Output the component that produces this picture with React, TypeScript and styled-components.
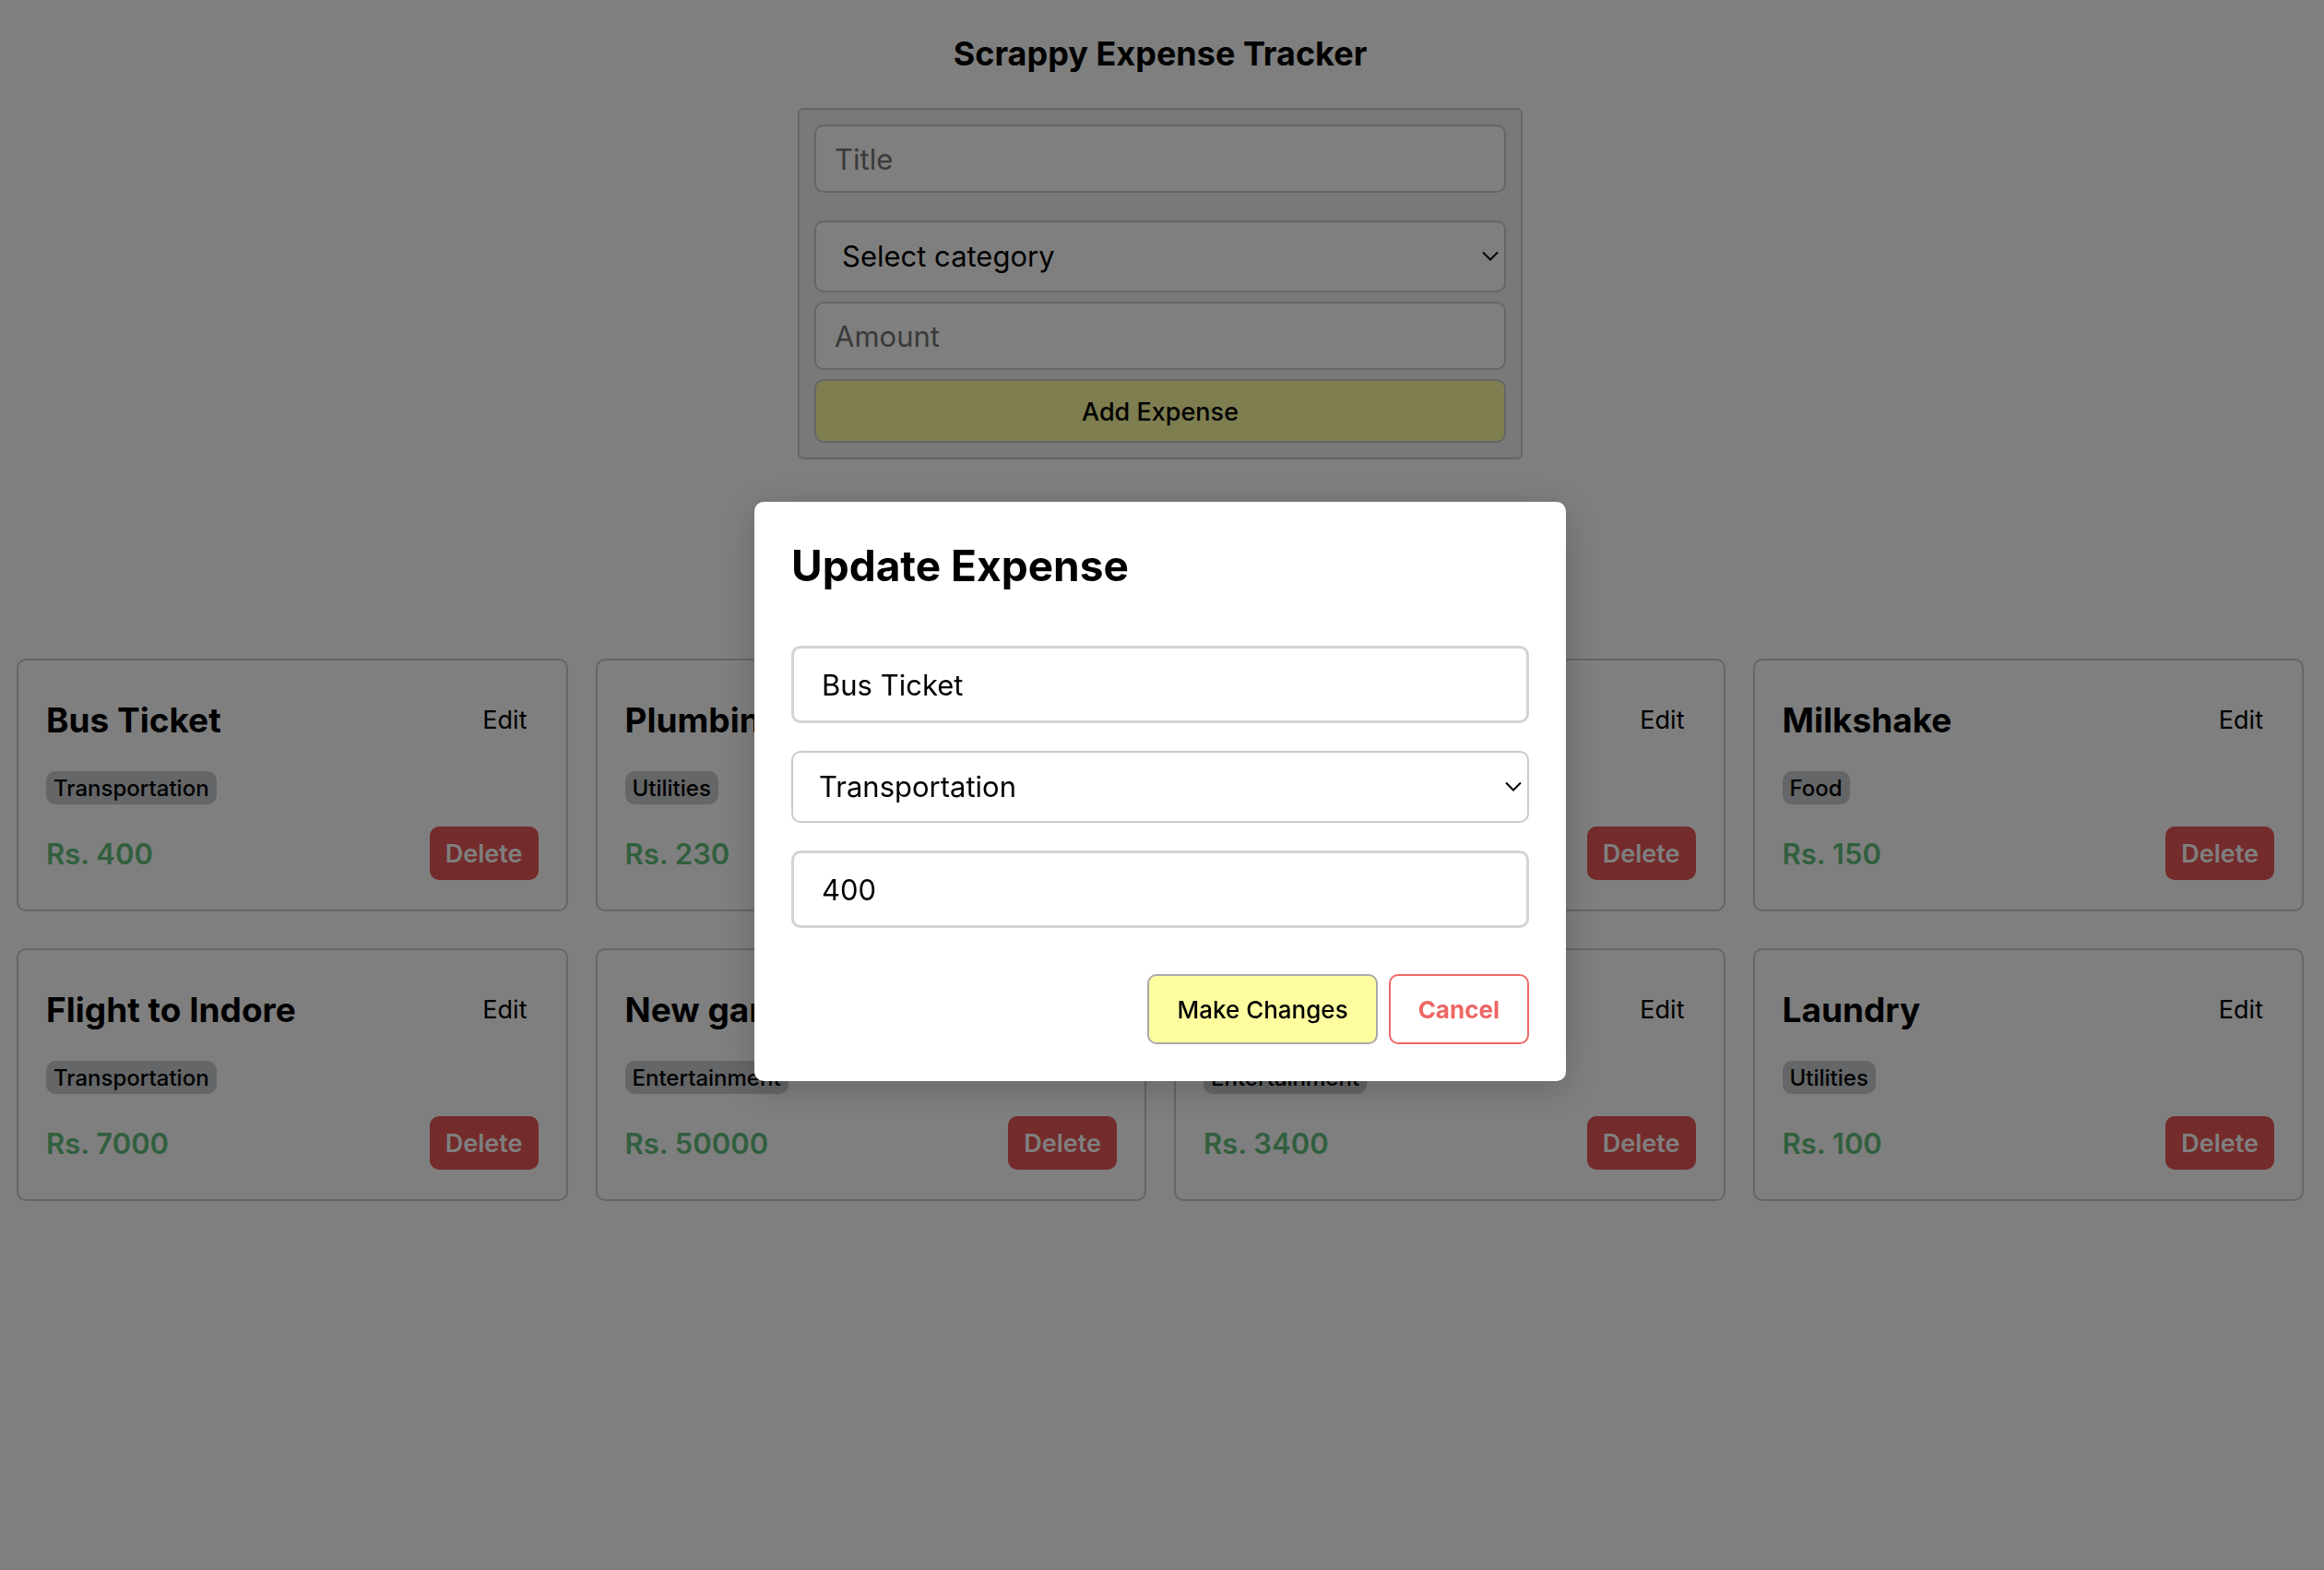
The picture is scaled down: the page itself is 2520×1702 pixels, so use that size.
import React from "react";
import styled, { createGlobalStyle } from "styled-components";

const colors = {
  text: "#000000",
  border: "#c9ccce",
  panel: "#f3f3f3",
  accent: "#fdfda0",
  danger: "#e85656",
  cancel: "#ed6765",
  amount: "#62be7c",
  tag: "#c8ccd0",
};

const GlobalStyle = createGlobalStyle`
  *, *::before, *::after { box-sizing: border-box; }
  body {
    margin: 0;
    background: #ffffff;
    color: ${colors.text};
    font-family: Inter, "Liberation Sans", sans-serif;
  }
  button, input, select { font: inherit; color: inherit; margin: 0; }
`;

const Page = styled.main`
  display: flex;
  flex-direction: column;
  align-items: center;
  padding: 34px 22px 40px 18px;
`;

const PageTitle = styled.h1`
  margin: 0 0 35px;
  font-size: 36px;
  line-height: 48px;
  font-weight: 700;
`;

const EntryForm = styled.form`
  display: flex;
  flex-direction: column;
  gap: 10px;
  width: 100%;
  max-width: 786px;
  margin-bottom: 216px;
  padding: 16px;
  border: 2px solid ${colors.border};
  border-radius: 6px;
  background: ${colors.panel};
`;

const FormInput = styled.input<{ $spaced?: boolean }>`
  width: 100%;
  margin-bottom: ${(p) => (p.$spaced ? "20px" : "0")};
  padding: 16px 20px;
  border: 2px solid ${colors.border};
  border-radius: 10px;
  background: #ffffff;
  font-size: 31px;
  line-height: 38px;
  height: 74px;
  outline: none;
  &::placeholder { color: #757575; opacity: 1; }
`;

const SelectBox = styled.div`
  position: relative;
  display: flex;
`;

const SelectControl = styled.select`
  appearance: none;
  width: 100%;
  padding: 18px 40px 18px 28px;
  border: 2px solid ${colors.border};
  border-radius: 10px;
  background: #ffffff;
  font-size: 31px;
  line-height: 38px;
  outline: none;
`;

const SelectArrow = styled.svg`
  position: absolute;
  top: 0;
  bottom: 0;
  right: 8px;
  margin: auto 0;
  pointer-events: none;
`;

const AddButton = styled.button`
  padding: 17px 16px 15px;
  border: 2px solid ${colors.border};
  border-radius: 10px;
  background: ${colors.accent};
  font-size: 27px;
  line-height: 33px;
  font-weight: 500;
  cursor: pointer;
`;

const CardGrid = styled.section`
  display: grid;
  grid-template-columns: repeat(4, minmax(0, 1fr));
  gap: 40px 30px;
  width: 100%;
`;

const Card = styled.article`
  display: flex;
  flex-direction: column;
  align-items: stretch;
  padding: 31px 30px 32px;
  border: 2px solid ${colors.border};
  border-radius: 10px;
  background: #ffffff;
`;

const CardRow = styled.div`
  display: flex;
  align-items: center;
  justify-content: space-between;
`;

const CardTitle = styled.h2`
  margin: 0;
  font-size: 37px;
  line-height: 68px;
  font-weight: 700;
  white-space: nowrap;
`;

const EditButton = styled.button`
  padding: 8px 12px;
  border: 0;
  background: transparent;
  font-size: 27px;
  line-height: 32px;
  cursor: pointer;
`;

const Tag = styled.span`
  align-self: flex-start;
  margin: 21px 0 24px;
  padding: 1px 8px 0;
  border-radius: 10px;
  background: ${colors.tag};
  font-size: 24px;
  line-height: 35px;
  font-weight: 500;
`;

const Amount = styled.span`
  padding-top: 2px;
  color: ${colors.amount};
  font-size: 31px;
  line-height: 38px;
  font-weight: 600;
`;

const DeleteButton = styled.button`
  padding: 14px 17px 12px;
  border: 0;
  border-radius: 10px;
  background: ${colors.danger};
  color: #ffffff;
  font-size: 27px;
  line-height: 32px;
  font-weight: 600;
  cursor: pointer;
`;

const Overlay = styled.div`
  position: fixed;
  inset: 0;
  display: flex;
  align-items: center;
  justify-content: center;
  padding: 14px 4px 0 0;
  background: rgba(0, 0, 0, 0.5);
`;

const Dialog = styled.form`
  display: flex;
  flex-direction: column;
  gap: 30px;
  width: 100%;
  max-width: 880px;
  padding: 40px;
  border-radius: 10px;
  background: #ffffff;
  box-shadow: 0 8px 40px rgba(0, 0, 0, 0.2);
`;

const DialogTitle = styled.h2`
  margin: 0 0 28px;
  font-size: 46px;
  line-height: 58px;
  font-weight: 700;
`;

const DialogInput = styled.input`
  width: 100%;
  height: 84px;
  padding: 20px 30px;
  border: 3px solid #d3d3d3;
  border-radius: 10px;
  background: #ffffff;
  font-size: 31px;
  line-height: 38px;
  outline: none;
`;

const DialogActions = styled.div`
  display: flex;
  justify-content: flex-end;
  gap: 12px;
  margin-top: 20px;
`;

const DialogButton = styled.button<{ $primary?: boolean }>`
  padding: 21px 30px 19px;
  border: 2px solid ${(p) => (p.$primary ? "#a9a9a9" : colors.cancel)};
  border-radius: 10px;
  background: ${(p) => (p.$primary ? colors.accent : "#ffffff")};
  color: ${(p) => (p.$primary ? colors.text : colors.cancel)};
  font-size: 26px;
  line-height: 32px;
  font-weight: ${(p) => (p.$primary ? 500 : 700)};
  cursor: pointer;
`;

const categories = ["Transportation", "Utilities", "Food", "Entertainment"];

const expenses = [
  { title: "Bus Ticket", category: "Transportation", amount: 400 },
  { title: "Plumbing", category: "Utilities", amount: 230 },
  { title: "Groceries", category: "Food", amount: 900 },
  { title: "Milkshake", category: "Food", amount: 150 },
  { title: "Flight to Indore", category: "Transportation", amount: 7000 },
  { title: "New gaming PC", category: "Entertainment", amount: 50000 },
  { title: "Concert", category: "Entertainment", amount: 3400 },
  { title: "Laundry", category: "Utilities", amount: 100 },
];

type CategorySelectProps = {
  label: string;
  value: string;
  placeholder?: string;
};

function CategorySelect({ label, value, placeholder }: CategorySelectProps) {
  return (
    <SelectBox>
      <SelectControl aria-label={label} defaultValue={value}>
        {placeholder && <option value="">{placeholder}</option>}
        {categories.map((c) => (
          <option key={c} value={c}>
            {c}
          </option>
        ))}
      </SelectControl>
      <SelectArrow width="18" height="12" viewBox="0 0 18 12" fill="none" aria-hidden="true">
        <path d="M1 1.5 L9 9.5 L17 1.5" stroke="#000000" strokeWidth="2" />
      </SelectArrow>
    </SelectBox>
  );
}

export default function App() {
  return (
    <>
      <GlobalStyle />
      <Page>
        <PageTitle>Scrappy Expense Tracker</PageTitle>
        <EntryForm onSubmit={(e) => e.preventDefault()}>
          <FormInput $spaced aria-label="Title" placeholder="Title" />
          <CategorySelect label="Category" value="" placeholder="Select category" />
          <FormInput type="number" aria-label="Amount" placeholder="Amount" />
          <AddButton type="submit">Add Expense</AddButton>
        </EntryForm>
        <CardGrid aria-label="Expenses">
          {expenses.map((e) => (
            <Card key={e.title}>
              <CardRow>
                <CardTitle>{e.title}</CardTitle>
                <EditButton type="button">Edit</EditButton>
              </CardRow>
              <Tag>{e.category}</Tag>
              <CardRow>
                <Amount>Rs. {e.amount}</Amount>
                <DeleteButton type="button">Delete</DeleteButton>
              </CardRow>
            </Card>
          ))}
        </CardGrid>
      </Page>
      <Overlay>
        <Dialog role="dialog" aria-modal="true" aria-labelledby="dialog-title" onSubmit={(e) => e.preventDefault()}>
          <DialogTitle id="dialog-title">Update Expense</DialogTitle>
          <DialogInput aria-label="Title" defaultValue="Bus Ticket" />
          <CategorySelect label="Category" value="Transportation" />
          <DialogInput type="number" aria-label="Amount" defaultValue={400} />
          <DialogActions>
            <DialogButton $primary type="submit">
              Make Changes
            </DialogButton>
            <DialogButton type="button">Cancel</DialogButton>
          </DialogActions>
        </Dialog>
      </Overlay>
    </>
  );
}
